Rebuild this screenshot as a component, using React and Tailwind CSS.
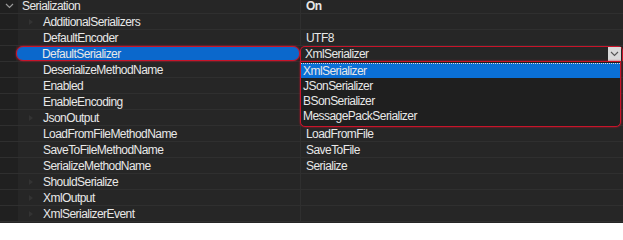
import React from "react";

const rows = [
  { name: "AdditionalSerializers", value: "", arrow: true },
  { name: "DefaultEncoder", value: "UTF8" },
  { name: "DefaultSerializer", value: "XmlSerializer", selected: true },
  { name: "DeserializeMethodName", value: "" },
  { name: "Enabled", value: "" },
  { name: "EnableEncoding", value: "" },
  { name: "JsonOutput", value: "", arrow: true },
  { name: "LoadFromFileMethodName", value: "LoadFromFile" },
  { name: "SaveToFileMethodName", value: "SaveToFile" },
  { name: "SerializeMethodName", value: "Serialize" },
  { name: "ShouldSerialize", value: "", arrow: true },
  { name: "XmlOutput", value: "", arrow: true },
  { name: "XmlSerializerEvent", value: "", arrow: true },
];

const items = ["XmlSerializer", "JSonSerializer", "BSonSerializer", "MessagePackSerializer"];

function Arrow() {
  return (
    <svg width="6" height="8" viewBox="0 0 6 8" className="block">
      <path d="M1 1 L5 4 L1 7 Z" fill="#333333" />
    </svg>
  );
}

export default function App() {
  return (
    <div className="relative w-[623px] h-[223px] overflow-hidden bg-[#262626] text-[12px] leading-none text-[#e8e8e8] font-['Liberation_Sans',Arial,sans-serif] tracking-[-0.55px]">
      <div className="-mt-[2px] flex flex-col">
        {/* category row */}
        <div className="flex h-[16px] border-b border-[#2f2f2f]">
          <div className="w-[18px] flex items-center justify-center bg-[#202020]">
            <svg width="9" height="6" viewBox="0 0 9 6">
              <path d="M1 1 L4.5 4.5 L8 1" stroke="#9a9a9a" strokeWidth="1.2" fill="none" />
            </svg>
          </div>
          <div className="w-[282px] flex items-center pl-[4px]">Serialization</div>
          <div className="flex-1 flex items-center pl-[5px] font-bold border-l border-[#2f2f2f]">On</div>
        </div>
        {rows.map((r) =>
          r.selected ? (
            <div key={r.name} className="flex h-[16px] border-b border-[#2f2f2f]">
              <div className="w-[16px] bg-[#202020]" />
              <div className="w-[284px] flex items-center pl-[25px] bg-[#0b68cc] border-[1.5px] border-[#c8142a] rounded-[7px] shadow-[0_0_2px_#c8142a]">
                {r.name}
              </div>
              <div className="flex-1 flex items-center justify-between pl-[4px] pr-[1px] border-[1.5px] border-b-0 border-[#c8142a] rounded-t-[5px]">
                <span>{r.value}</span>
                <div className="w-[13px] h-[14px] bg-[#d9d9d9] flex items-center justify-center">
                  <svg width="9" height="6" viewBox="0 0 9 6">
                    <path d="M1 1 L4.5 4.5 L8 1" stroke="#555" strokeWidth="1.1" fill="none" />
                  </svg>
                </div>
              </div>
            </div>
          ) : (
            <div key={r.name} className="flex h-[16px] border-b border-[#2f2f2f]">
              <div className="w-[18px] bg-[#202020]" />
              <div className="w-[25px] flex items-center justify-center">{r.arrow ? <Arrow /> : null}</div>
              <div className="w-[257px] flex items-center">{r.name}</div>
              <div className="flex-1 flex items-center pl-[5px] border-l border-[#2f2f2f]">{r.value}</div>
            </div>
          )
        )}
      </div>
      {/* dropdown list */}
      <div className="absolute left-[300px] top-[61px] w-[321px] h-[66px] bg-[#1f1f1f] border-[1.5px] border-[#c8142a] rounded-b-[5px] shadow-[0_0_2px_#c8142a] flex flex-col pt-[1px]">
        {items.map((it, i) => (
          <div
            key={it}
            className={
              i === 0
                ? "h-[15px] flex items-center pl-[2px] bg-[#0a6fd6] border-t border-dotted border-[#dcdcdc]"
                : "h-[15px] flex items-center pl-[2px]"
            }
          >
            {it}
          </div>
        ))}
      </div>
    </div>
  );
}
